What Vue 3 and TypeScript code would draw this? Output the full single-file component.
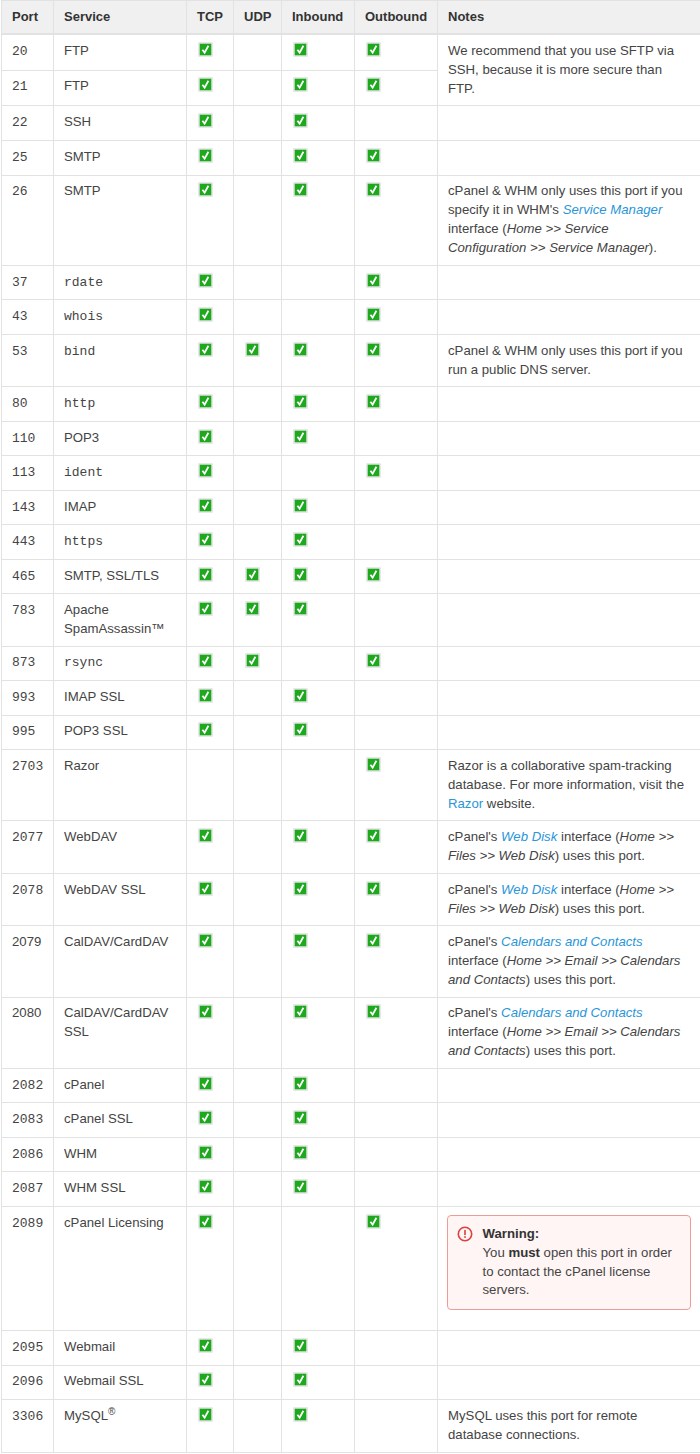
<script setup lang="ts">
type Part = { t: string; k?: 'i' | 'a' | 'ai' | 'b' }
interface Row {
  port: string
  plain?: boolean
  svc: string
  code?: boolean
  tm?: string
  flags: string
  notes?: Part[]
  warn?: boolean
  span?: number
  skip?: boolean
}
const webDisk: Part[] = [
  { t: "cPanel's " }, { t: 'Web Disk', k: 'ai' }, { t: ' interface (' }, { t: 'Home >> Files >> Web Disk', k: 'i' }, { t: ') uses this port.' },
]
const cal: Part[] = [
  { t: "cPanel's " }, { t: 'Calendars and Contacts', k: 'ai' }, { t: ' interface (' }, { t: 'Home >> Email >> Calendars and Contacts', k: 'i' }, { t: ') uses this port.' },
]
const dns: Part[] = [{ t: 'cPanel & WHM only uses this port if you run a public DNS server.' }]
const rows: Row[] = [
  { port: '20', svc: 'FTP', flags: 'T-IO', notes: [{ t: 'We recommend that you use SFTP via SSH, because it is more secure than FTP.' }], span: 2 },
  { port: '21', svc: 'FTP', flags: 'T-IO', skip: true },
  { port: '22', svc: 'SSH', flags: 'T-I-' },
  { port: '25', svc: 'SMTP', flags: 'T-IO' },
  { port: '26', svc: 'SMTP', flags: 'T-IO', notes: [
    { t: "cPanel & WHM only uses this port if you specify it in WHM's " }, { t: 'Service Manager', k: 'ai' }, { t: ' interface (' }, { t: 'Home >> Service Configuration >> Service Manager', k: 'i' }, { t: ').' },
  ] },
  { port: '37', svc: 'rdate', code: true, flags: 'T--O' },
  { port: '43', svc: 'whois', code: true, flags: 'T--O' },
  { port: '53', svc: 'bind', code: true, flags: 'TUIO', notes: dns },
  { port: '80', svc: 'http', code: true, flags: 'T-IO' },
  { port: '110', svc: 'POP3', flags: 'T-I-' },
  { port: '113', svc: 'ident', code: true, flags: 'T--O' },
  { port: '143', svc: 'IMAP', flags: 'T-I-' },
  { port: '443', svc: 'https', code: true, flags: 'T-I-' },
  { port: '465', svc: 'SMTP, SSL/TLS', flags: 'TUIO' },
  { port: '783', svc: 'Apache SpamAssassin™', flags: 'TUI-' },
  { port: '873', svc: 'rsync', code: true, flags: 'TU-O' },
  { port: '993', svc: 'IMAP SSL', flags: 'T-I-' },
  { port: '995', svc: 'POP3 SSL', flags: 'T-I-' },
  { port: '2703', svc: 'Razor', flags: '---O', notes: [
    { t: 'Razor is a collaborative spam-tracking database. For more information, visit the ' }, { t: 'Razor', k: 'a' }, { t: ' website.' },
  ] },
  { port: '2077', svc: 'WebDAV', flags: 'T-IO', notes: webDisk },
  { port: '2078', svc: 'WebDAV SSL', flags: 'T-IO', notes: webDisk },
  { port: '2079', plain: true, svc: 'CalDAV/CardDAV', flags: 'T-IO', notes: cal },
  { port: '2080', plain: true, svc: 'CalDAV/CardDAV SSL', flags: 'T-IO', notes: cal },
  { port: '2082', svc: 'cPanel', flags: 'T-I-' },
  { port: '2083', svc: 'cPanel SSL', flags: 'T-I-' },
  { port: '2086', svc: 'WHM', flags: 'T-I-' },
  { port: '2087', svc: 'WHM SSL', flags: 'T-I-' },
  { port: '2089', svc: 'cPanel Licensing', flags: 'T--O', warn: true },
  { port: '2095', svc: 'Webmail', flags: 'T-I-' },
  { port: '2096', svc: 'Webmail SSL', flags: 'T-I-' },
  { port: '3306', svc: 'MySQL', tm: '®', flags: 'T-I-', notes: [{ t: 'MySQL uses this port for remote database connections.' }] },
]
const flagChars = (f: string): boolean[] => f.split('').map((c) => c !== '-')
</script>

<template>
  <div class="wrap">
    <table class="ports">
      <colgroup>
        <col class="c-port" /><col class="c-svc" /><col class="c-tcp" /><col class="c-udp" /><col class="c-in" /><col class="c-out" /><col class="c-notes" />
      </colgroup>
      <thead>
        <tr>
          <th>Port</th><th>Service</th><th>TCP</th><th>UDP</th><th>Inbound</th><th>Outbound</th><th>Notes</th>
        </tr>
      </thead>
      <tbody>
        <tr v-for="r in rows" :key="r.port">
          <td><span :class="r.plain ? '' : 'mono'">{{ r.port }}</span></td>
          <td>
            <span :class="r.code ? 'mono' : ''">{{ r.svc }}</span><sup v-if="r.tm" class="reg">{{ r.tm }}</sup>
          </td>
          <td v-for="(on, i) in flagChars(r.flags)" :key="i">
            <svg v-if="on" class="check" width="15" height="15" viewBox="0 0 15 15" role="img" aria-label="Yes">
              <rect x="0" y="0" width="15" height="15" rx="1" fill="#e8e8e8" />
              <rect x="1.7" y="1.7" width="11.6" height="11.6" fill="#1ea81e" />
              <path d="M4.4 7.8 L6.6 10.6 L10.4 3.7" fill="none" stroke="#fff" stroke-width="1.8" />
            </svg>
          </td>
          <td v-if="!r.skip" :rowspan="r.span || 1" class="note-cell">
            <div v-if="r.warn" class="warning">
              <svg class="warn-icon" width="16" height="16" viewBox="0 0 16 16" aria-hidden="true">
                <circle cx="8" cy="8" r="6.7" fill="none" stroke="#d9423f" stroke-width="1.6" />
                <rect x="7.2" y="3.9" width="1.6" height="5.2" fill="#d9423f" />
                <rect x="7.2" y="10.2" width="1.6" height="1.7" fill="#d9423f" />
              </svg>
              <div class="warn-text">
                <strong class="warn-head">Warning:</strong><br />You <strong class="must">must</strong> open this port in order to contact the cPanel license servers.
              </div>
            </div>
            <template v-else>
              <template v-for="(p, i) in r.notes" :key="i">
                <a v-if="p.k === 'a' || p.k === 'ai'" href="#" :class="p.k === 'ai' ? 'ital' : ''">{{ p.t }}</a>
                <em v-else-if="p.k === 'i'">{{ p.t }}</em>
                <template v-else>{{ p.t }}</template>
              </template>
            </template>
          </td>
        </tr>
      </tbody>
    </table>
  </div>
</template>

<style>
html, body { margin: 0; background: #fff; }
body { overflow: hidden; }
</style>

<style scoped>
.wrap {
  width: 700px;
  height: 1454px;
  overflow: hidden;
  font-family: "Liberation Sans", Arial, sans-serif;
  font-size: 13.2px;
  line-height: 18.9px;
  color: #444;
}
.ports {
  border-collapse: collapse;
  table-layout: fixed;
  width: 702px;
  margin-left: 1px;
}
.c-port { width: 52px; }
.c-svc { width: 133px; }
.c-tcp { width: 47px; }
.c-udp { width: 48px; }
.c-in { width: 73px; }
.c-out { width: 83px; }
.c-notes { width: 266px; }
th, td {
  border: 1px solid #e2e2e2;
  padding: 6.8px 10px;
  text-align: left;
  vertical-align: top;
}
tbody tr:nth-child(-n+4) td { padding-bottom: 6.95px; }
.note-cell { padding-right: 14px; }
th {
  background: #f0f0f0;
  border-bottom-width: 2px;
  color: #333;
  font-weight: 700;
  font-size: 13px;
  padding: 6.5px 10px;
}
a { color: #2a96d8; text-decoration: none; }
.ital { font-style: italic; }
.mono {
  font-family: "Liberation Mono", "Courier New", monospace;
  font-size: 13px;
}
.reg { font-size: 10px; line-height: 0; }
.check { display: block; margin-left: 1px; }
.warning {
  display: flex;
  gap: 9.5px;
  border: 1px solid #eb9e98;
  border-radius: 4px;
  background: #fff5f4;
  padding: 9px 16px 9px 9px;
  margin: 1px -1.5px 13px -1px;
  box-sizing: border-box;
}
.warn-icon { flex: none; margin-top: 1px; }
.warn-head, .must { color: #333; }
</style>
